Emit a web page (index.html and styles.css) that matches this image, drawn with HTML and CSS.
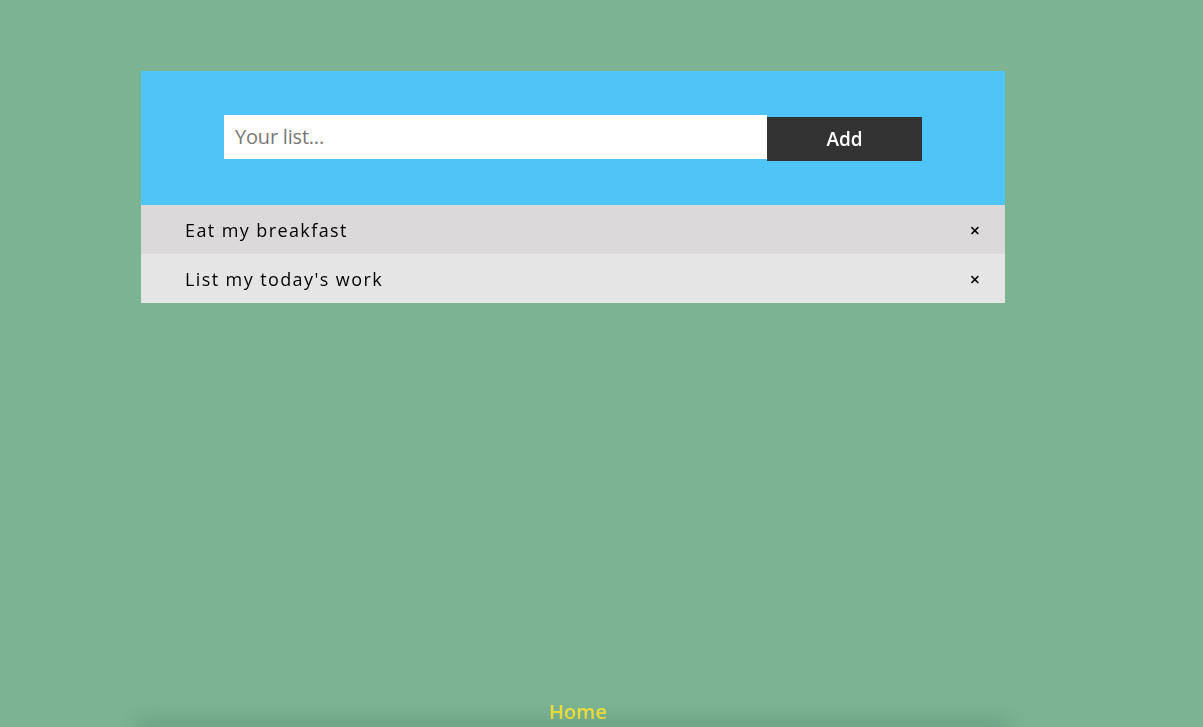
FILE: index.html
```html
<!DOCTYPE html>
<html>
<head>
<meta charset="utf-8">
<link rel="stylesheet" href="styles.css">
</head>
<body>
<div class="page">
  <main class="app">
    <header class="app-header">
      <form class="add-form">
        <input class="add-input" type="text" placeholder="Your list..." autofocus>
        <button class="add-btn" type="button">Add</button>
      </form>
    </header>
    <ul class="list">
      <li class="item item-a"><span class="item-text">Eat my breakfast</span><span class="close">×</span></li>
      <li class="item item-b"><span class="item-text">List my today's work</span><span class="close">×</span></li>
    </ul>
  </main>
  <footer class="footer">
    <a class="home-link">Home</a>
    <div class="footer-bar"></div>
  </footer>
</div>
</body>
</html>
```

FILE: styles.css
```css
html, body {
  margin: 0;
  padding: 0;
  height: 100%;
}
body {
  background: #7bb393;
  font-family: "Open Sans", "Noto Sans", sans-serif;
  overflow: hidden;
}
.page {
  height: 100%;
  display: flex;
  flex-direction: column;
  padding-left: 141px;
  box-sizing: border-box;
}
.app {
  width: 864px;
  margin-top: 71px;
}
.app-header {
  background: #4fc4f6;
  height: 134px;
  box-sizing: border-box;
  padding: 44px 0 0 83px;
}
.add-form {
  display: flex;
  align-items: flex-start;
  margin: 0;
}
.add-input {
  width: 543px;
  height: 44px;
  border: none;
  outline: none;
  margin: 0;
  padding: 0 0 1px 11px;
  box-sizing: border-box;
  font-family: "Open Sans", "Noto Sans", sans-serif;
  font-size: 20px;
  color: #333;
  background: #fff;
  caret-color: #000;
}
.add-input::placeholder {
  color: #777;
  letter-spacing: -0.2px;
}
.add-btn {
  width: 155px;
  height: 44px;
  margin: 2px 0 0 0;
  border: none;
  background: #333333;
  color: #fff;
  font-family: "Open Sans", "Noto Sans", sans-serif;
  font-weight: 600;
  font-size: 19px;
  padding: 0;
}
.list {
  list-style: none;
  margin: 0;
  padding: 0;
}
.item {
  height: 49px;
  display: flex;
  align-items: center;
  justify-content: space-between;
  padding: 0 25px 0 44px;
  font-size: 18px;
  letter-spacing: 1.4px;
  color: #000;
}
.item-a { background: #dbd9da; }
.item-b { background: #e5e5e5; }
.item-text { margin-top: 0; }
.close {
  font-size: 18px;
  letter-spacing: 0;
  font-weight: 600;
  margin-top: 1px;
}
.footer {
  margin-top: auto;
  width: 864px;
  display: flex;
  flex-direction: column;
  align-items: center;
}
.home-link {
  color: #f2e03a;
  font-size: 20px;
  font-weight: 600;
  line-height: 28px;
  margin-left: 10px;
  margin-bottom: 1px;
}
.footer-bar {
  width: 100%;
  height: 0;
  box-shadow: 0 0 18px 4px rgba(40, 80, 60, 0.35);
}
```
